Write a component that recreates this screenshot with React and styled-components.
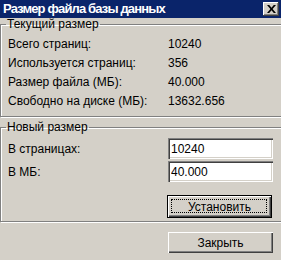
import React, { useState } from 'react'
import styled, { createGlobalStyle } from 'styled-components'

const Global = createGlobalStyle`
    html, body {
        margin:0;
        padding:0;
        background:#D4D0C8;
    }
    body {
        font-family:"Liberation Sans", Arial, sans-serif;
        font-size:12px;
        color:#000;
    }
`

const Window = styled.div`
    width:281px;
    height:260px;
    overflow:hidden;
    background:#D4D0C8;
    display:flex;
    flex-direction:column;
`

const TitleBar = styled.div`
    height:18px;
    flex:none;
    background:#0A246A;
    display:flex;
    align-items:center;
    justify-content:space-between;
    padding:0 2px 0 3px;
`

const Title = styled.span`
    color:#fff;
    font-weight:bold;
    font-size:13px;
    letter-spacing:-0.85px;
    line-height:18px;
    white-space:nowrap;
`

const CloseBox = styled.div`
    width:16px;
    height:14px;
    box-sizing:border-box;
    background:#D4D0C8;
    display:flex;
    align-items:center;
    justify-content:center;
    box-shadow:inset -1px -1px 0 #404040, inset 1px 1px 0 #fff, inset -2px -2px 0 #808080;
`

const Group = styled.fieldset`
    margin:0 -6px 0 0;
    padding:0 0 0 7px;
    height:${p => p.$h}px;
    box-sizing:border-box;
    border:1px solid #808080;
    box-shadow:inset 1px 1px 0 #fff, 1px 1px 0 #fff;
    display:flex;
    flex-direction:column;
    min-width:0;
`

const Legend = styled.legend`
    padding:0 1px;
    margin-left:-2px;
    line-height:13px;
`

const Row = styled.div`
    height:19px;
    display:grid;
    grid-template-columns:160px 1fr;
    align-items:center;
    white-space:nowrap;
`

const FieldRow = styled.div`
    display:grid;
    grid-template-columns:160px 105px;
    align-items:center;
    height:21px;
    margin-top:${p => p.$top || 0}px;
`

const Input = styled.input`
    width:105px;
    height:21px;
    box-sizing:border-box;
    border:none;
    margin:0;
    padding:2px 3px 1px;
    font:inherit;
    background:#fff;
    box-shadow:inset 1px 1px 0 #808080, inset 2px 2px 0 #404040, inset -1px -1px 0 #fff, inset -2px -2px 0 #D4D0C8;
    outline:none;
`

const Button = styled.button`
    width:105px;
    height:${p => p.$default ? 23 : 21}px;
    box-sizing:border-box;
    margin:0;
    padding:0;
    font:inherit;
    color:#000;
    background:#D4D0C8;
    border:${p => p.$default ? '1px solid #000' : 'none'};
    box-shadow:inset 1px 1px 0 #fff, inset -1px -1px 0 #404040, inset -2px -2px 0 #808080;
    position:relative;
    cursor:pointer;
`

const Focus = styled.span`
    position:absolute;
    left:3px;
    top:3px;
    right:4px;
    bottom:4px;
    border:1px dotted #000;
`

const ButtonRow = styled.div`
    display:flex;
    justify-content:flex-end;
    padding-right:${p => p.$right || 0}px;
    margin-top:${p => p.$top || 0}px;
`

const Spacer = styled.div`
    height:${p => p.$h}px;
    flex:none;
`

const stats = [
    ['Всего страниц:', '10240'],
    ['Используется страниц:', '356'],
    ['Размер файла (МБ):', '40.000'],
    ['Свободно на диске (МБ):', '13632.656'],
]

export default function App() {
    const [pages, setPages] = useState('10240')
    const [mb, setMb] = useState('40.000')

    return (
        <Window>
            <Global />
            <TitleBar>
                <Title>Размер файла базы данных</Title>
                <CloseBox>
                    <svg width="9" height="8" viewBox="0 0 9 8">
                        <path d="M0 0h2.2l2.3 2.8L6.8 0H9L5.6 4 9 8H6.8L4.5 5.2 2.2 8H0l3.4-4z" fill="#000" />
                    </svg>
                </CloseBox>
            </TitleBar>
            <Group $h={99}>
                <Legend>Текущий размер</Legend>
                <Spacer $h={3} />
                {stats.map(([k, v]) => (
                    <Row key={k}>
                        <span>{k}</span>
                        <span>{v}</span>
                    </Row>
                ))}
            </Group>
            <Spacer $h={4} />
            <Group $h={101}>
                <Legend>Новый размер</Legend>
                <FieldRow $top={4}>
                    <span>В страницах:</span>
                    <Input value={pages} onChange={e => setPages(e.target.value)} />
                </FieldRow>
                <FieldRow $top={2}>
                    <span>В МБ:</span>
                    <Input value={mb} onChange={e => setMb(e.target.value)} />
                </FieldRow>
                <ButtonRow $right={14} $top={13}>
                    <Button $default>
                        <Focus />
                        Установить
                    </Button>
                </ButtonRow>
            </Group>
            <ButtonRow $right={8} $top={10}>
                <Button>Закрыть</Button>
            </ButtonRow>
        </Window>
    )
}
